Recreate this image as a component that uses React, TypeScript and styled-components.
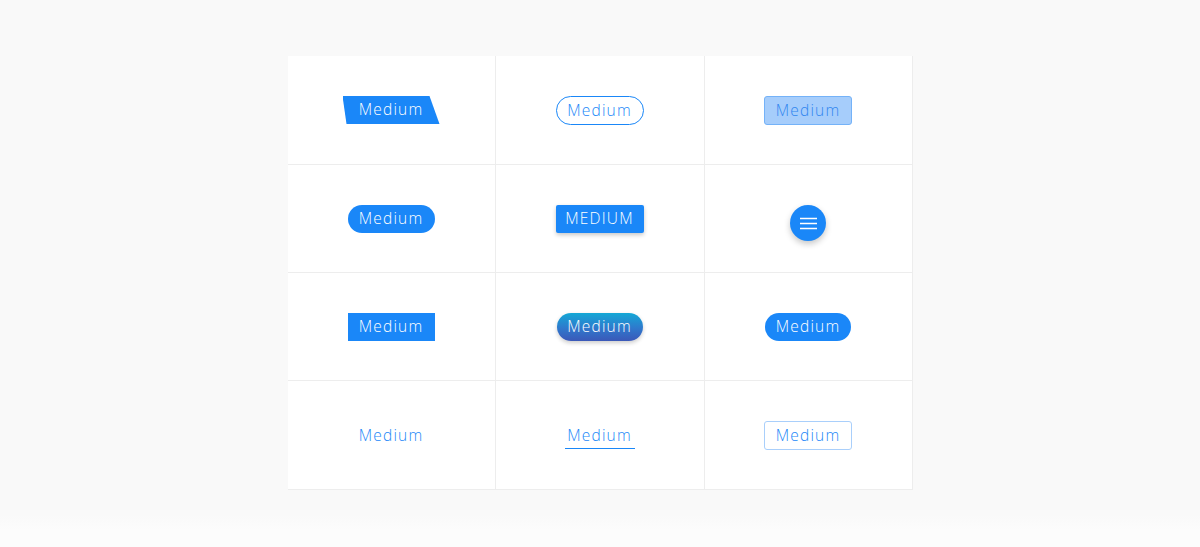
import React from "react";
import styled, { createGlobalStyle, css } from "styled-components";

const Global = createGlobalStyle`
  html, body { margin: 0; padding: 0; }
  body {
    background: linear-gradient(#f9f9f9 0, #f9f9f9 515px, #fcfcfc 530px, #fcfcfc 100%);
    min-height: 547px;
    font-family: "Open Sans", "Liberation Sans", sans-serif;
  }
`;

const Page = styled.div`
  display: flex;
  justify-content: center;
  padding-top: 56px;
`;

const Grid = styled.div`
  display: grid;
  grid-template-columns: 207px 209px 208px;
  grid-template-rows: 108px 108px 108px 109px;
  background: #ffffff;
  border-right: 1px solid #ededed;
  border-bottom: 1px solid #ededed;
`;

const Cell = styled.div`
  display: flex;
  align-items: center;
  justify-content: center;
  border-left: 1px solid #ededed;
  border-top: 1px solid #ededed;
  box-sizing: border-box;
  &:nth-child(3n + 1) { border-left: none; }
  &:nth-child(-n + 3) { border-top: none; }
`;

const BLUE = "#1a87f8";

type Variant =
  | "skew" | "outlinePill" | "light" | "pill" | "caps" | "square"
  | "gradient" | "pill2" | "text" | "underline" | "outlineRect";

const Btn = styled.button<{ $v: Variant }>`
  font-family: "Open Sans", "Liberation Sans", sans-serif;
  font-weight: 300;
  font-size: 15.5px;
  letter-spacing: 1.2px;
  line-height: 1;
  height: 28px;
  width: 87px;
  padding: 0;
  display: inline-flex;
  align-items: center;
  justify-content: center;
  border: none;
  background: transparent;
  color: #ffffff;
  cursor: pointer;
  position: relative;
  box-sizing: border-box;

  ${({ $v }) => {
    switch ($v) {
      case "skew":
        return css`
          width: 97px;
          background: ${BLUE};
          clip-path: polygon(0 0, 87px 0, 97px 100%, 4px 100%);
        `;
      case "outlinePill":
        return css`
          width: 88px; height: 29px;
          border: 1px solid ${BLUE};
          border-radius: 15px;
          color: ${BLUE};
        `;
      case "light":
        return css`
          width: 88px; height: 29px;
          background: #a6cdfb;
          border: 1px solid #74b2f8;
          border-radius: 3px;
          color: #2f86f0;
        `;
      case "pill":
        return css`
          background: ${BLUE};
          border-radius: 14px;
        `;
      case "caps":
        return css`
          width: 88px;
          background: ${BLUE};
          border-radius: 2px;
          text-transform: uppercase;
          box-shadow: 0 2px 4px rgba(0, 0, 0, 0.22);
        `;
      case "square":
        return css`
          background: ${BLUE};
        `;
      case "gradient":
        return css`
          width: 86px;
          background: linear-gradient(180deg, #14a8d6 0%, #2f78cc 55%, #3b58b8 100%);
          border-radius: 14px;
          box-shadow: 0 2px 4px rgba(0, 0, 0, 0.2);
        `;
      case "pill2":
        return css`
          width: 86px;
          background: ${BLUE};
          border-radius: 14px;
        `;
      case "text":
        return css`
          color: ${BLUE};
        `;
      case "underline":
        return css`
          width: 70px;
          color: ${BLUE};
          &::after {
            content: "";
            position: absolute;
            left: 0; right: 0; bottom: 1px;
            height: 1px;
            background: ${BLUE};
          }
        `;
      case "outlineRect":
        return css`
          width: 88px; height: 29px;
          border: 1px solid #a9cffb;
          border-radius: 3px;
          color: ${BLUE};
        `;
    }
  }}
`;

const Fab = styled.button`
  width: 36px;
  height: 36px;
  border-radius: 50%;
  border: none;
  background: ${BLUE};
  box-shadow: 0 3px 6px rgba(0, 0, 0, 0.22);
  display: inline-flex;
  align-items: center;
  justify-content: center;
  padding: 0;
  margin-top: 9px;
  cursor: pointer;
`;

const Label = styled.span``;

const Menu = () => (
  <svg width="17" height="13" viewBox="0 0 17 13" fill="none">
    <path d="M0 1.5h17M0 6.5h17M0 11.5h17" stroke="#ffffff" strokeWidth="1.3" />
  </svg>
);

const rows: (Variant | "fab")[] = [
  "skew", "outlinePill", "light",
  "pill", "caps", "fab",
  "square", "gradient", "pill2",
  "text", "underline", "outlineRect",
];

const offsets: Partial<Record<Variant, string>> = {
  text: "1px",
  underline: "1px",
  outlineRect: "1px",
  outlinePill: "1px",
  light: "1px",
};

export default function App() {
  return (
    <>
      <Global />
      <Page>
        <Grid>
          {rows.map((v, i) => (
            <Cell key={i}>
              {v === "fab" ? (
                <Fab aria-label="menu"><Menu /></Fab>
              ) : (
                <Btn $v={v} style={offsets[v] ? { marginTop: offsets[v] } : undefined}>
                  <Label>Medium</Label>
                </Btn>
              )}
            </Cell>
          ))}
        </Grid>
      </Page>
    </>
  );
}
